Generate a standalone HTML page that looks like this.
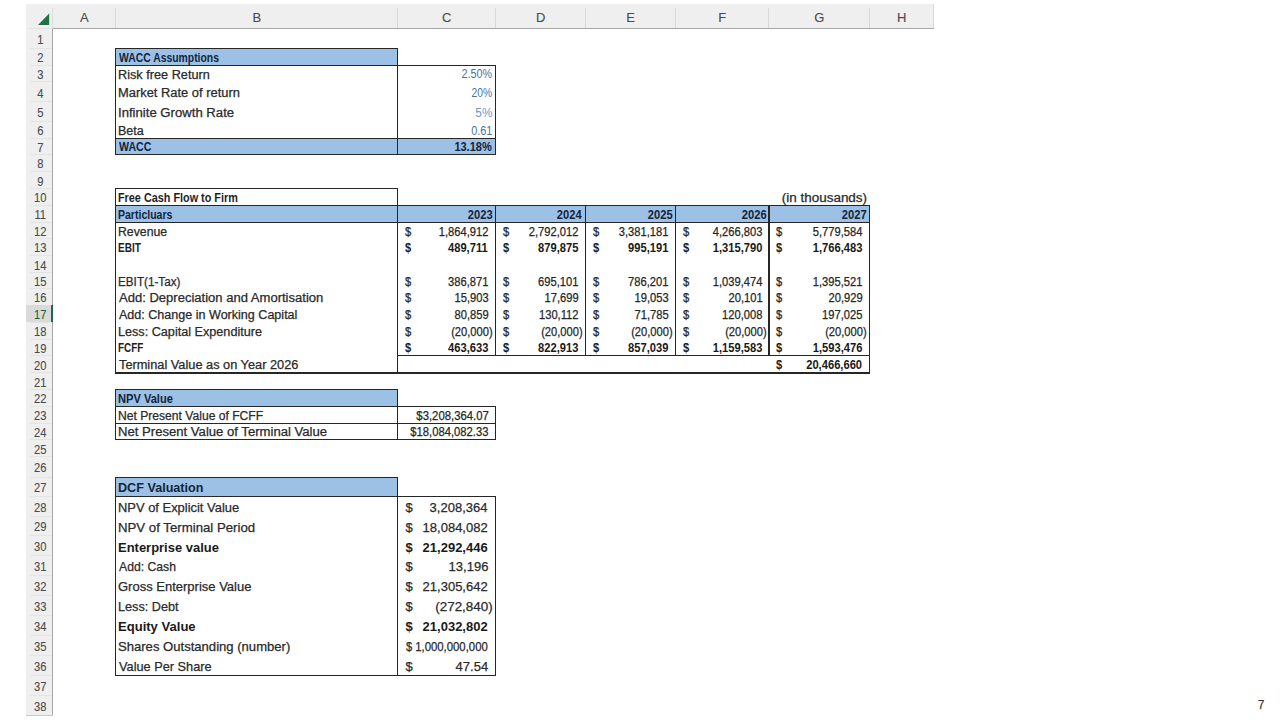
<!DOCTYPE html>
<html><head><meta charset="utf-8"><title>DCF</title>
<style>
html,body{margin:0;padding:0;background:#fff;width:1280px;height:720px;overflow:hidden;position:relative}
.t,.h{position:absolute;white-space:nowrap;line-height:1;font-family:'Liberation Sans', sans-serif}
.r{-webkit-text-stroke:0.25px currentColor}
.h{color:#4a4a4a;-webkit-text-stroke:0.1px currentColor}
</style></head><body>
<div style='position:absolute;left:26.00px;top:4.20px;width:907.50px;height:24.40px;background:#efefef'></div>
<div style='position:absolute;left:52.00px;top:27.80px;width:882.00px;height:1.2px;background:#a6a6a6'></div>
<div style='position:absolute;left:115.00px;top:7.50px;width:1px;height:20.60px;background:#d9d9d9'></div>
<div style='position:absolute;left:397.00px;top:7.50px;width:1px;height:20.60px;background:#d9d9d9'></div>
<div style='position:absolute;left:494.70px;top:7.50px;width:1px;height:20.60px;background:#d9d9d9'></div>
<div style='position:absolute;left:585.10px;top:7.50px;width:1px;height:20.60px;background:#d9d9d9'></div>
<div style='position:absolute;left:674.70px;top:7.50px;width:1px;height:20.60px;background:#d9d9d9'></div>
<div style='position:absolute;left:768.40px;top:7.50px;width:1px;height:20.60px;background:#d9d9d9'></div>
<div style='position:absolute;left:868.80px;top:7.50px;width:1px;height:20.60px;background:#d9d9d9'></div>
<div style='position:absolute;left:933.00px;top:3.70px;width:1px;height:24.80px;background:#d9d9d9'></div>
<div style='position:absolute;left:26.00px;top:28.40px;width:26.50px;height:687.00px;background:#efefef'></div>
<div style='position:absolute;left:28.50px;top:27.90px;width:23.50px;height:1px;background:#e2e2e2'></div>
<div style='position:absolute;left:51.90px;top:27.70px;width:1.2px;height:688.20px;background:#a6a6a6'></div>
<div style='position:absolute;left:52.00px;top:7.50px;width:1px;height:21.00px;background:#dcdcdc'></div>
<div style='position:absolute;left:25.50px;top:714.90px;width:27.50px;height:1px;background:#c9c9c9'></div>
<div style='position:absolute;left:29.50px;top:47.80px;width:22.50px;height:1px;background:#e4e4e4'></div>
<div style='position:absolute;left:29.50px;top:64.80px;width:22.50px;height:1px;background:#e4e4e4'></div>
<div style='position:absolute;left:29.50px;top:81.00px;width:22.50px;height:1px;background:#e4e4e4'></div>
<div style='position:absolute;left:29.50px;top:101.20px;width:22.50px;height:1px;background:#e4e4e4'></div>
<div style='position:absolute;left:29.50px;top:120.50px;width:22.50px;height:1px;background:#e4e4e4'></div>
<div style='position:absolute;left:29.50px;top:138.00px;width:22.50px;height:1px;background:#e4e4e4'></div>
<div style='position:absolute;left:29.50px;top:153.80px;width:22.50px;height:1px;background:#e4e4e4'></div>
<div style='position:absolute;left:29.50px;top:171.00px;width:22.50px;height:1px;background:#e4e4e4'></div>
<div style='position:absolute;left:29.50px;top:188.20px;width:22.50px;height:1px;background:#e4e4e4'></div>
<div style='position:absolute;left:29.50px;top:205.00px;width:22.50px;height:1px;background:#e4e4e4'></div>
<div style='position:absolute;left:29.50px;top:221.70px;width:22.50px;height:1px;background:#e4e4e4'></div>
<div style='position:absolute;left:29.50px;top:238.40px;width:22.50px;height:1px;background:#e4e4e4'></div>
<div style='position:absolute;left:29.50px;top:254.80px;width:22.50px;height:1px;background:#e4e4e4'></div>
<div style='position:absolute;left:29.50px;top:272.10px;width:22.50px;height:1px;background:#e4e4e4'></div>
<div style='position:absolute;left:29.50px;top:288.10px;width:22.50px;height:1px;background:#e4e4e4'></div>
<div style='position:absolute;left:29.50px;top:304.70px;width:22.50px;height:1px;background:#e4e4e4'></div>
<div style='position:absolute;left:29.50px;top:321.90px;width:22.50px;height:1px;background:#e4e4e4'></div>
<div style='position:absolute;left:29.50px;top:338.50px;width:22.50px;height:1px;background:#e4e4e4'></div>
<div style='position:absolute;left:29.50px;top:355.20px;width:22.50px;height:1px;background:#e4e4e4'></div>
<div style='position:absolute;left:29.50px;top:372.40px;width:22.50px;height:1px;background:#e4e4e4'></div>
<div style='position:absolute;left:29.50px;top:389.30px;width:22.50px;height:1px;background:#e4e4e4'></div>
<div style='position:absolute;left:29.50px;top:405.80px;width:22.50px;height:1px;background:#e4e4e4'></div>
<div style='position:absolute;left:29.50px;top:423.00px;width:22.50px;height:1px;background:#e4e4e4'></div>
<div style='position:absolute;left:29.50px;top:439.30px;width:22.50px;height:1px;background:#e4e4e4'></div>
<div style='position:absolute;left:29.50px;top:456.30px;width:22.50px;height:1px;background:#e4e4e4'></div>
<div style='position:absolute;left:29.50px;top:476.70px;width:22.50px;height:1px;background:#e4e4e4'></div>
<div style='position:absolute;left:29.50px;top:495.80px;width:22.50px;height:1px;background:#e4e4e4'></div>
<div style='position:absolute;left:29.50px;top:515.70px;width:22.50px;height:1px;background:#e4e4e4'></div>
<div style='position:absolute;left:29.50px;top:535.40px;width:22.50px;height:1px;background:#e4e4e4'></div>
<div style='position:absolute;left:29.50px;top:555.30px;width:22.50px;height:1px;background:#e4e4e4'></div>
<div style='position:absolute;left:29.50px;top:574.90px;width:22.50px;height:1px;background:#e4e4e4'></div>
<div style='position:absolute;left:29.50px;top:594.90px;width:22.50px;height:1px;background:#e4e4e4'></div>
<div style='position:absolute;left:29.50px;top:615.30px;width:22.50px;height:1px;background:#e4e4e4'></div>
<div style='position:absolute;left:29.50px;top:635.30px;width:22.50px;height:1px;background:#e4e4e4'></div>
<div style='position:absolute;left:29.50px;top:655.30px;width:22.50px;height:1px;background:#e4e4e4'></div>
<div style='position:absolute;left:29.50px;top:674.90px;width:22.50px;height:1px;background:#e4e4e4'></div>
<div style='position:absolute;left:29.50px;top:694.70px;width:22.50px;height:1px;background:#e4e4e4'></div>
<div style='position:absolute;left:26.00px;top:305.20px;width:25.20px;height:17.20px;background:#dadada'></div>
<div style='position:absolute;left:51.00px;top:305.20px;width:2.20px;height:17.20px;background:#1e6a40'></div>
<div style='position:absolute;left:115.50px;top:48.30px;width:282.00px;height:17.00px;background:#9cc1e5'></div>
<div style='position:absolute;left:115.50px;top:138.50px;width:379.70px;height:15.80px;background:#9cc1e5'></div>
<div style='position:absolute;left:115.50px;top:205.50px;width:753.80px;height:16.70px;background:#9cc1e5'></div>
<div style='position:absolute;left:115.50px;top:389.80px;width:282.00px;height:16.50px;background:#9cc1e5'></div>
<div style='position:absolute;left:115.50px;top:477.20px;width:282.00px;height:19.10px;background:#9cc1e5'></div>
<div style='position:absolute;left:115.00px;top:47.65px;width:283.00px;height:1.3px;background:#262626'></div>
<div style='position:absolute;left:115.00px;top:64.65px;width:380.70px;height:1.3px;background:#262626'></div>
<div style='position:absolute;left:115.00px;top:137.85px;width:380.70px;height:1.3px;background:#262626'></div>
<div style='position:absolute;left:115.00px;top:153.65px;width:380.70px;height:1.3px;background:#262626'></div>
<div style='position:absolute;left:114.85px;top:47.80px;width:1.3px;height:107.00px;background:#262626'></div>
<div style='position:absolute;left:396.85px;top:47.80px;width:1.3px;height:107.00px;background:#262626'></div>
<div style='position:absolute;left:494.55px;top:64.80px;width:1.3px;height:90.00px;background:#262626'></div>
<div style='position:absolute;left:115.00px;top:188.05px;width:283.00px;height:1.3px;background:#262626'></div>
<div style='position:absolute;left:115.00px;top:204.85px;width:754.80px;height:1.3px;background:#262626'></div>
<div style='position:absolute;left:115.00px;top:221.55px;width:754.80px;height:1.3px;background:#262626'></div>
<div style='position:absolute;left:397.00px;top:355.05px;width:472.80px;height:1.3px;background:#262626'></div>
<div style='position:absolute;left:115.00px;top:372.25px;width:754.80px;height:1.3px;background:#262626'></div>
<div style='position:absolute;left:114.85px;top:188.20px;width:1.3px;height:185.20px;background:#262626'></div>
<div style='position:absolute;left:396.85px;top:188.20px;width:1.3px;height:185.20px;background:#262626'></div>
<div style='position:absolute;left:868.65px;top:205.00px;width:1.3px;height:168.40px;background:#262626'></div>
<div style='position:absolute;left:494.55px;top:205.00px;width:1.3px;height:151.20px;background:#262626'></div>
<div style='position:absolute;left:584.95px;top:205.00px;width:1.3px;height:151.20px;background:#262626'></div>
<div style='position:absolute;left:674.55px;top:205.00px;width:1.3px;height:151.20px;background:#262626'></div>
<div style='position:absolute;left:768.25px;top:205.00px;width:1.3px;height:151.20px;background:#262626'></div>
<div style='position:absolute;left:115.00px;top:389.15px;width:283.00px;height:1.3px;background:#262626'></div>
<div style='position:absolute;left:115.00px;top:405.65px;width:380.70px;height:1.3px;background:#262626'></div>
<div style='position:absolute;left:115.00px;top:422.95px;width:380.70px;height:1.1px;background:#262626'></div>
<div style='position:absolute;left:115.00px;top:439.15px;width:380.70px;height:1.3px;background:#262626'></div>
<div style='position:absolute;left:114.85px;top:389.30px;width:1.3px;height:51.00px;background:#262626'></div>
<div style='position:absolute;left:396.85px;top:389.30px;width:1.3px;height:51.00px;background:#262626'></div>
<div style='position:absolute;left:494.55px;top:405.80px;width:1.3px;height:34.50px;background:#262626'></div>
<div style='position:absolute;left:115.00px;top:476.55px;width:283.00px;height:1.3px;background:#262626'></div>
<div style='position:absolute;left:115.00px;top:495.65px;width:380.70px;height:1.3px;background:#262626'></div>
<div style='position:absolute;left:115.00px;top:674.75px;width:380.70px;height:1.3px;background:#262626'></div>
<div style='position:absolute;left:114.85px;top:476.70px;width:1.3px;height:199.20px;background:#262626'></div>
<div style='position:absolute;left:396.85px;top:476.70px;width:1.3px;height:199.20px;background:#262626'></div>
<div style='position:absolute;left:494.55px;top:495.80px;width:1.3px;height:180.10px;background:#262626'></div>
<svg style='position:absolute;left:0;top:0' width='60' height='30'><polygon points='38,25 49.2,25 49.2,13.6' fill='#207245'/></svg>
<div class='h' style='left:54.30px;top:10.85px;width:60px;text-align:center;font-size:13px'>A</div>
<div class='h' style='left:226.80px;top:10.85px;width:60px;text-align:center;font-size:13px'>B</div>
<div class='h' style='left:416.65px;top:10.85px;width:60px;text-align:center;font-size:13px'>C</div>
<div class='h' style='left:510.70px;top:10.85px;width:60px;text-align:center;font-size:13px'>D</div>
<div class='h' style='left:600.70px;top:10.85px;width:60px;text-align:center;font-size:13px'>E</div>
<div class='h' style='left:692.35px;top:10.85px;width:60px;text-align:center;font-size:13px'>F</div>
<div class='h' style='left:789.40px;top:10.85px;width:60px;text-align:center;font-size:13px'>G</div>
<div class='h' style='left:871.70px;top:10.85px;width:60px;text-align:center;font-size:13px'>H</div>
<div class='h' style='left:26.90px;top:33.25px;width:26.50px;text-align:center;font-size:13px;transform:scaleX(0.86);color:#4a4a4a'>1</div>
<div class='h' style='left:26.90px;top:51.05px;width:26.50px;text-align:center;font-size:13px;transform:scaleX(0.86);color:#4a4a4a'>2</div>
<div class='h' style='left:26.90px;top:67.85px;width:26.50px;text-align:center;font-size:13px;transform:scaleX(0.86);color:#4a4a4a'>3</div>
<div class='h' style='left:26.90px;top:86.55px;width:26.50px;text-align:center;font-size:13px;transform:scaleX(0.86);color:#4a4a4a'>4</div>
<div class='h' style='left:26.90px;top:106.25px;width:26.50px;text-align:center;font-size:13px;transform:scaleX(0.86);color:#4a4a4a'>5</div>
<div class='h' style='left:26.90px;top:124.35px;width:26.50px;text-align:center;font-size:13px;transform:scaleX(0.86);color:#4a4a4a'>6</div>
<div class='h' style='left:26.90px;top:140.55px;width:26.50px;text-align:center;font-size:13px;transform:scaleX(0.86);color:#4a4a4a'>7</div>
<div class='h' style='left:26.90px;top:157.45px;width:26.50px;text-align:center;font-size:13px;transform:scaleX(0.86);color:#4a4a4a'>8</div>
<div class='h' style='left:26.90px;top:174.65px;width:26.50px;text-align:center;font-size:13px;transform:scaleX(0.86);color:#4a4a4a'>9</div>
<div class='h' style='left:26.90px;top:191.45px;width:26.50px;text-align:center;font-size:13px;transform:scaleX(0.86);color:#4a4a4a'>10</div>
<div class='h' style='left:26.90px;top:208.15px;width:26.50px;text-align:center;font-size:13px;transform:scaleX(0.86);color:#4a4a4a'>11</div>
<div class='h' style='left:26.90px;top:224.85px;width:26.50px;text-align:center;font-size:13px;transform:scaleX(0.86);color:#4a4a4a'>12</div>
<div class='h' style='left:26.90px;top:241.25px;width:26.50px;text-align:center;font-size:13px;transform:scaleX(0.86);color:#4a4a4a'>13</div>
<div class='h' style='left:26.90px;top:258.55px;width:26.50px;text-align:center;font-size:13px;transform:scaleX(0.86);color:#4a4a4a'>14</div>
<div class='h' style='left:26.90px;top:274.55px;width:26.50px;text-align:center;font-size:13px;transform:scaleX(0.86);color:#4a4a4a'>15</div>
<div class='h' style='left:26.90px;top:291.15px;width:26.50px;text-align:center;font-size:13px;transform:scaleX(0.86);color:#4a4a4a'>16</div>
<div class='h' style='left:26.90px;top:308.35px;width:26.50px;text-align:center;font-size:13px;transform:scaleX(0.86);color:#1f5f3a'>17</div>
<div class='h' style='left:26.90px;top:324.95px;width:26.50px;text-align:center;font-size:13px;transform:scaleX(0.86);color:#4a4a4a'>18</div>
<div class='h' style='left:26.90px;top:341.65px;width:26.50px;text-align:center;font-size:13px;transform:scaleX(0.86);color:#4a4a4a'>19</div>
<div class='h' style='left:26.90px;top:358.85px;width:26.50px;text-align:center;font-size:13px;transform:scaleX(0.86);color:#4a4a4a'>20</div>
<div class='h' style='left:26.90px;top:375.75px;width:26.50px;text-align:center;font-size:13px;transform:scaleX(0.86);color:#4a4a4a'>21</div>
<div class='h' style='left:26.90px;top:392.25px;width:26.50px;text-align:center;font-size:13px;transform:scaleX(0.86);color:#4a4a4a'>22</div>
<div class='h' style='left:26.90px;top:409.45px;width:26.50px;text-align:center;font-size:13px;transform:scaleX(0.86);color:#4a4a4a'>23</div>
<div class='h' style='left:26.90px;top:425.75px;width:26.50px;text-align:center;font-size:13px;transform:scaleX(0.86);color:#4a4a4a'>24</div>
<div class='h' style='left:26.90px;top:442.75px;width:26.50px;text-align:center;font-size:13px;transform:scaleX(0.86);color:#4a4a4a'>25</div>
<div class='h' style='left:26.90px;top:460.95px;width:26.50px;text-align:center;font-size:13px;transform:scaleX(0.86);color:#4a4a4a'>26</div>
<div class='h' style='left:26.90px;top:480.85px;width:26.50px;text-align:center;font-size:13px;transform:scaleX(0.86);color:#4a4a4a'>27</div>
<div class='h' style='left:26.90px;top:500.75px;width:26.50px;text-align:center;font-size:13px;transform:scaleX(0.86);color:#4a4a4a'>28</div>
<div class='h' style='left:26.90px;top:520.45px;width:26.50px;text-align:center;font-size:13px;transform:scaleX(0.86);color:#4a4a4a'>29</div>
<div class='h' style='left:26.90px;top:540.35px;width:26.50px;text-align:center;font-size:13px;transform:scaleX(0.86);color:#4a4a4a'>30</div>
<div class='h' style='left:26.90px;top:559.95px;width:26.50px;text-align:center;font-size:13px;transform:scaleX(0.86);color:#4a4a4a'>31</div>
<div class='h' style='left:26.90px;top:579.95px;width:26.50px;text-align:center;font-size:13px;transform:scaleX(0.86);color:#4a4a4a'>32</div>
<div class='h' style='left:26.90px;top:600.35px;width:26.50px;text-align:center;font-size:13px;transform:scaleX(0.86);color:#4a4a4a'>33</div>
<div class='h' style='left:26.90px;top:620.35px;width:26.50px;text-align:center;font-size:13px;transform:scaleX(0.86);color:#4a4a4a'>34</div>
<div class='h' style='left:26.90px;top:640.35px;width:26.50px;text-align:center;font-size:13px;transform:scaleX(0.86);color:#4a4a4a'>35</div>
<div class='h' style='left:26.90px;top:659.95px;width:26.50px;text-align:center;font-size:13px;transform:scaleX(0.86);color:#4a4a4a'>36</div>
<div class='h' style='left:26.90px;top:679.75px;width:26.50px;text-align:center;font-size:13px;transform:scaleX(0.86);color:#4a4a4a'>37</div>
<div class='h' style='left:26.90px;top:699.95px;width:26.50px;text-align:center;font-size:13px;transform:scaleX(0.86);color:#4a4a4a'>38</div>
<div class='t' style="top:51.70px;font-size:12px;color:#13243d;font-weight:bold;left:118.90px;transform:scaleX(0.865);transform-origin:0 0;">WACC Assumptions</div>
<div class='t r' style="top:68.70px;font-size:12px;color:#2a2a2a;left:117.84px;transform:scaleX(1.059);transform-origin:0 0;">Risk free Return</div>
<div class='t r' style="top:87.40px;font-size:12px;color:#2a2a2a;left:117.83px;transform:scaleX(1.075);transform-origin:0 0;">Market Rate of return</div>
<div class='t r' style="top:107.20px;font-size:12px;color:#2a2a2a;left:117.80px;transform:scaleX(1.095);transform-origin:0 0;">Infinite Growth Rate</div>
<div class='t r' style="top:125.05px;font-size:12px;color:#2a2a2a;left:117.86px;transform:scaleX(1.042);transform-origin:0 0;">Beta</div>
<div class='t' style="top:141.30px;font-size:12px;color:#13243d;font-weight:bold;left:118.60px;transform:scaleX(0.883);transform-origin:0 0;">WACC</div>
<div class='t' style="top:68.30px;font-size:12px;color:#4872a0;right:788.27px;transform:scaleX(0.894);transform-origin:100% 0;">2.50%</div>
<div class='t' style="top:87.20px;font-size:12px;color:#4872a0;right:788.27px;transform:scaleX(0.850);transform-origin:100% 0;">20%</div>
<div class='t' style="top:107.00px;font-size:12px;color:#6b98cc;right:787.96px;transform:scaleX(0.981);transform-origin:100% 0;">5%</div>
<div class='t' style="top:125.00px;font-size:12px;color:#4872a0;right:787.98px;transform:scaleX(0.904);transform-origin:100% 0;">0.61</div>
<div class='t' style="top:141.30px;font-size:12px;color:#13243d;font-weight:bold;right:788.27px;transform:scaleX(0.917);transform-origin:100% 0;">13.18%</div>
<div class='t' style="top:191.90px;font-size:12px;color:#1e1e1e;font-weight:bold;left:118.00px;transform:scaleX(0.903);transform-origin:0 0;">Free Cash Flow to Firm</div>
<div class='t r' style="top:192.00px;font-size:12px;color:#2a2a2a;right:412.58px;transform:scaleX(1.120);transform-origin:100% 0;">(in thousands)</div>
<div class='t' style="top:208.70px;font-size:12px;color:#13243d;font-weight:bold;left:118.02px;transform:scaleX(0.877);transform-origin:0 0;">Particluars</div>
<div class='t r' style="top:225.60px;font-size:12px;color:#2a2a2a;left:117.88px;transform:scaleX(1.023);transform-origin:0 0;">Revenue</div>
<div class='t' style="top:241.90px;font-size:12px;color:#1e1e1e;font-weight:bold;left:118.06px;transform:scaleX(0.840);transform-origin:0 0;">EBIT</div>
<div class='t r' style="top:276.10px;font-size:12px;color:#2a2a2a;left:117.92px;transform:scaleX(0.976);transform-origin:0 0;">EBIT(1-Tax)</div>
<div class='t r' style="top:292.40px;font-size:12px;color:#2a2a2a;left:118.90px;transform:scaleX(1.086);transform-origin:0 0;">Add: Depreciation and Amortisation</div>
<div class='t r' style="top:309.30px;font-size:12px;color:#2a2a2a;left:118.90px;transform:scaleX(1.046);transform-origin:0 0;">Add: Change in Working Capital</div>
<div class='t r' style="top:326.10px;font-size:12px;color:#2a2a2a;left:117.85px;transform:scaleX(1.053);transform-origin:0 0;">Less: Capital Expenditure</div>
<div class='t' style="top:342.40px;font-size:12px;color:#1e1e1e;font-weight:bold;left:118.07px;transform:scaleX(0.828);transform-origin:0 0;">FCFF</div>
<div class='t r' style="top:359.10px;font-size:12px;color:#2a2a2a;left:118.90px;transform:scaleX(1.064);transform-origin:0 0;">Terminal Value as on Year 2026</div>
<div class='t' style="top:208.50px;font-size:12px;color:#13243d;font-weight:bold;right:787.45px;transform:scaleX(0.930);transform-origin:100% 0;">2023</div>
<div class='t' style="top:208.50px;font-size:12px;color:#13243d;font-weight:bold;right:698.08px;transform:scaleX(0.930);transform-origin:100% 0;">2024</div>
<div class='t' style="top:208.50px;font-size:12px;color:#13243d;font-weight:bold;right:607.78px;transform:scaleX(0.930);transform-origin:100% 0;">2025</div>
<div class='t' style="top:208.50px;font-size:12px;color:#13243d;font-weight:bold;right:513.10px;transform:scaleX(0.930);transform-origin:100% 0;">2026</div>
<div class='t' style="top:208.50px;font-size:12px;color:#13243d;font-weight:bold;right:413.10px;transform:scaleX(0.930);transform-origin:100% 0;">2027</div>
<div class='t r' style="top:225.60px;font-size:12px;color:#262626;left:405.20px;transform:scaleX(0.930);transform-origin:0 0;">$</div>
<div class='t r' style="top:225.60px;font-size:12px;color:#262626;right:791.64px;transform:scaleX(0.930);transform-origin:100% 0;">1,864,912</div>
<div class='t r' style="top:225.60px;font-size:12px;color:#262626;left:502.50px;transform:scaleX(0.930);transform-origin:0 0;">$</div>
<div class='t r' style="top:225.60px;font-size:12px;color:#262626;right:701.54px;transform:scaleX(0.930);transform-origin:100% 0;">2,792,012</div>
<div class='t r' style="top:225.60px;font-size:12px;color:#262626;left:592.50px;transform:scaleX(0.930);transform-origin:0 0;">$</div>
<div class='t r' style="top:225.60px;font-size:12px;color:#262626;right:611.64px;transform:scaleX(0.930);transform-origin:100% 0;">3,381,181</div>
<div class='t r' style="top:225.60px;font-size:12px;color:#262626;left:682.80px;transform:scaleX(0.930);transform-origin:0 0;">$</div>
<div class='t r' style="top:225.60px;font-size:12px;color:#262626;right:518.04px;transform:scaleX(0.930);transform-origin:100% 0;">4,266,803</div>
<div class='t r' style="top:225.60px;font-size:12px;color:#262626;left:776.10px;transform:scaleX(0.930);transform-origin:0 0;">$</div>
<div class='t r' style="top:225.60px;font-size:12px;color:#262626;right:417.54px;transform:scaleX(0.930);transform-origin:100% 0;">5,779,584</div>
<div class='t' style="top:241.90px;font-size:12px;color:#1a1a1a;font-weight:bold;left:405.20px;transform:scaleX(0.930);transform-origin:0 0;">$</div>
<div class='t' style="top:241.90px;font-size:12px;color:#1a1a1a;font-weight:bold;right:792.26px;transform:scaleX(0.930);transform-origin:100% 0;">489,711</div>
<div class='t' style="top:241.90px;font-size:12px;color:#1a1a1a;font-weight:bold;left:502.50px;transform:scaleX(0.930);transform-origin:0 0;">$</div>
<div class='t' style="top:241.90px;font-size:12px;color:#1a1a1a;font-weight:bold;right:701.54px;transform:scaleX(0.930);transform-origin:100% 0;">879,875</div>
<div class='t' style="top:241.90px;font-size:12px;color:#1a1a1a;font-weight:bold;left:592.50px;transform:scaleX(0.930);transform-origin:0 0;">$</div>
<div class='t' style="top:241.90px;font-size:12px;color:#1a1a1a;font-weight:bold;right:611.64px;transform:scaleX(0.930);transform-origin:100% 0;">995,191</div>
<div class='t' style="top:241.90px;font-size:12px;color:#1a1a1a;font-weight:bold;left:682.80px;transform:scaleX(0.930);transform-origin:0 0;">$</div>
<div class='t' style="top:241.90px;font-size:12px;color:#1a1a1a;font-weight:bold;right:518.04px;transform:scaleX(0.930);transform-origin:100% 0;">1,315,790</div>
<div class='t' style="top:241.90px;font-size:12px;color:#1a1a1a;font-weight:bold;left:776.10px;transform:scaleX(0.930);transform-origin:0 0;">$</div>
<div class='t' style="top:241.90px;font-size:12px;color:#1a1a1a;font-weight:bold;right:417.54px;transform:scaleX(0.930);transform-origin:100% 0;">1,766,483</div>
<div class='t r' style="top:276.10px;font-size:12px;color:#262626;left:405.20px;transform:scaleX(0.930);transform-origin:0 0;">$</div>
<div class='t r' style="top:276.10px;font-size:12px;color:#262626;right:791.64px;transform:scaleX(0.930);transform-origin:100% 0;">386,871</div>
<div class='t r' style="top:276.10px;font-size:12px;color:#262626;left:502.50px;transform:scaleX(0.930);transform-origin:0 0;">$</div>
<div class='t r' style="top:276.10px;font-size:12px;color:#262626;right:701.54px;transform:scaleX(0.930);transform-origin:100% 0;">695,101</div>
<div class='t r' style="top:276.10px;font-size:12px;color:#262626;left:592.50px;transform:scaleX(0.930);transform-origin:0 0;">$</div>
<div class='t r' style="top:276.10px;font-size:12px;color:#262626;right:611.64px;transform:scaleX(0.930);transform-origin:100% 0;">786,201</div>
<div class='t r' style="top:276.10px;font-size:12px;color:#262626;left:682.80px;transform:scaleX(0.930);transform-origin:0 0;">$</div>
<div class='t r' style="top:276.10px;font-size:12px;color:#262626;right:518.04px;transform:scaleX(0.930);transform-origin:100% 0;">1,039,474</div>
<div class='t r' style="top:276.10px;font-size:12px;color:#262626;left:776.10px;transform:scaleX(0.930);transform-origin:0 0;">$</div>
<div class='t r' style="top:276.10px;font-size:12px;color:#262626;right:417.54px;transform:scaleX(0.930);transform-origin:100% 0;">1,395,521</div>
<div class='t r' style="top:292.40px;font-size:12px;color:#262626;left:405.20px;transform:scaleX(0.930);transform-origin:0 0;">$</div>
<div class='t r' style="top:292.40px;font-size:12px;color:#262626;right:791.35px;transform:scaleX(0.930);transform-origin:100% 0;">15,903</div>
<div class='t r' style="top:292.40px;font-size:12px;color:#262626;left:502.50px;transform:scaleX(0.930);transform-origin:0 0;">$</div>
<div class='t r' style="top:292.40px;font-size:12px;color:#262626;right:701.25px;transform:scaleX(0.930);transform-origin:100% 0;">17,699</div>
<div class='t r' style="top:292.40px;font-size:12px;color:#262626;left:592.50px;transform:scaleX(0.930);transform-origin:0 0;">$</div>
<div class='t r' style="top:292.40px;font-size:12px;color:#262626;right:611.35px;transform:scaleX(0.930);transform-origin:100% 0;">19,053</div>
<div class='t r' style="top:292.40px;font-size:12px;color:#262626;left:682.80px;transform:scaleX(0.930);transform-origin:0 0;">$</div>
<div class='t r' style="top:292.40px;font-size:12px;color:#262626;right:517.75px;transform:scaleX(0.930);transform-origin:100% 0;">20,101</div>
<div class='t r' style="top:292.40px;font-size:12px;color:#262626;left:776.10px;transform:scaleX(0.930);transform-origin:0 0;">$</div>
<div class='t r' style="top:292.40px;font-size:12px;color:#262626;right:417.25px;transform:scaleX(0.930);transform-origin:100% 0;">20,929</div>
<div class='t r' style="top:309.30px;font-size:12px;color:#262626;left:405.20px;transform:scaleX(0.930);transform-origin:0 0;">$</div>
<div class='t r' style="top:309.30px;font-size:12px;color:#262626;right:791.35px;transform:scaleX(0.930);transform-origin:100% 0;">80,859</div>
<div class='t r' style="top:309.30px;font-size:12px;color:#262626;left:502.50px;transform:scaleX(0.930);transform-origin:0 0;">$</div>
<div class='t r' style="top:309.30px;font-size:12px;color:#262626;right:701.43px;transform:scaleX(0.930);transform-origin:100% 0;">130,112</div>
<div class='t r' style="top:309.30px;font-size:12px;color:#262626;left:592.50px;transform:scaleX(0.930);transform-origin:0 0;">$</div>
<div class='t r' style="top:309.30px;font-size:12px;color:#262626;right:611.35px;transform:scaleX(0.930);transform-origin:100% 0;">71,785</div>
<div class='t r' style="top:309.30px;font-size:12px;color:#262626;left:682.80px;transform:scaleX(0.930);transform-origin:0 0;">$</div>
<div class='t r' style="top:309.30px;font-size:12px;color:#262626;right:518.04px;transform:scaleX(0.930);transform-origin:100% 0;">120,008</div>
<div class='t r' style="top:309.30px;font-size:12px;color:#262626;left:776.10px;transform:scaleX(0.930);transform-origin:0 0;">$</div>
<div class='t r' style="top:309.30px;font-size:12px;color:#262626;right:417.54px;transform:scaleX(0.930);transform-origin:100% 0;">197,025</div>
<div class='t r' style="top:326.10px;font-size:12px;color:#262626;left:405.20px;transform:scaleX(0.930);transform-origin:0 0;">$</div>
<div class='t r' style="top:326.10px;font-size:12px;color:#262626;right:787.35px;transform:scaleX(0.930);transform-origin:100% 0;">(20,000)</div>
<div class='t r' style="top:326.10px;font-size:12px;color:#262626;left:502.50px;transform:scaleX(0.930);transform-origin:0 0;">$</div>
<div class='t r' style="top:326.10px;font-size:12px;color:#262626;right:697.25px;transform:scaleX(0.930);transform-origin:100% 0;">(20,000)</div>
<div class='t r' style="top:326.10px;font-size:12px;color:#262626;left:592.50px;transform:scaleX(0.930);transform-origin:0 0;">$</div>
<div class='t r' style="top:326.10px;font-size:12px;color:#262626;right:607.35px;transform:scaleX(0.930);transform-origin:100% 0;">(20,000)</div>
<div class='t r' style="top:326.10px;font-size:12px;color:#262626;left:682.80px;transform:scaleX(0.930);transform-origin:0 0;">$</div>
<div class='t r' style="top:326.10px;font-size:12px;color:#262626;right:513.75px;transform:scaleX(0.930);transform-origin:100% 0;">(20,000)</div>
<div class='t r' style="top:326.10px;font-size:12px;color:#262626;left:776.10px;transform:scaleX(0.930);transform-origin:0 0;">$</div>
<div class='t r' style="top:326.10px;font-size:12px;color:#262626;right:413.25px;transform:scaleX(0.930);transform-origin:100% 0;">(20,000)</div>
<div class='t' style="top:342.40px;font-size:12px;color:#1a1a1a;font-weight:bold;left:405.20px;transform:scaleX(0.930);transform-origin:0 0;">$</div>
<div class='t' style="top:342.40px;font-size:12px;color:#1a1a1a;font-weight:bold;right:791.64px;transform:scaleX(0.930);transform-origin:100% 0;">463,633</div>
<div class='t' style="top:342.40px;font-size:12px;color:#1a1a1a;font-weight:bold;left:502.50px;transform:scaleX(0.930);transform-origin:0 0;">$</div>
<div class='t' style="top:342.40px;font-size:12px;color:#1a1a1a;font-weight:bold;right:701.54px;transform:scaleX(0.930);transform-origin:100% 0;">822,913</div>
<div class='t' style="top:342.40px;font-size:12px;color:#1a1a1a;font-weight:bold;left:592.50px;transform:scaleX(0.930);transform-origin:0 0;">$</div>
<div class='t' style="top:342.40px;font-size:12px;color:#1a1a1a;font-weight:bold;right:611.64px;transform:scaleX(0.930);transform-origin:100% 0;">857,039</div>
<div class='t' style="top:342.40px;font-size:12px;color:#1a1a1a;font-weight:bold;left:682.80px;transform:scaleX(0.930);transform-origin:0 0;">$</div>
<div class='t' style="top:342.40px;font-size:12px;color:#1a1a1a;font-weight:bold;right:518.04px;transform:scaleX(0.930);transform-origin:100% 0;">1,159,583</div>
<div class='t' style="top:342.40px;font-size:12px;color:#1a1a1a;font-weight:bold;left:776.10px;transform:scaleX(0.930);transform-origin:0 0;">$</div>
<div class='t' style="top:342.40px;font-size:12px;color:#1a1a1a;font-weight:bold;right:417.54px;transform:scaleX(0.930);transform-origin:100% 0;">1,593,476</div>
<div class='t' style="top:359.10px;font-size:12px;color:#1a1a1a;font-weight:bold;left:776.10px;transform:scaleX(0.930);transform-origin:0 0;">$</div>
<div class='t' style="top:359.10px;font-size:12px;color:#1a1a1a;font-weight:bold;right:417.84px;transform:scaleX(0.930);transform-origin:100% 0;">20,466,660</div>
<div class='t' style="top:393.00px;font-size:12px;color:#13243d;font-weight:bold;left:117.98px;transform:scaleX(0.924);transform-origin:0 0;">NPV Value</div>
<div class='t r' style="top:409.70px;font-size:12px;color:#2a2a2a;left:117.89px;transform:scaleX(1.009);transform-origin:0 0;">Net Present Value of FCFF</div>
<div class='t r' style="top:426.30px;font-size:12px;color:#2a2a2a;left:117.81px;transform:scaleX(1.092);transform-origin:0 0;">Net Present Value of Terminal Value</div>
<div class='t r' style="top:409.60px;font-size:12px;color:#262626;right:791.39px;transform:scaleX(0.943);transform-origin:100% 0;">$3,208,364.07</div>
<div class='t r' style="top:426.40px;font-size:12px;color:#262626;right:791.71px;transform:scaleX(0.936);transform-origin:100% 0;">$18,084,082.33</div>
<div class='t' style="top:480.95px;font-size:13px;color:#13243d;font-weight:bold;left:118.03px;transform:scaleX(0.970);transform-origin:0 0;">DCF Valuation</div>
<div class='t r' style="top:500.85px;font-size:13px;color:#2a2a2a;left:118.01px;transform:scaleX(0.994);transform-origin:0 0;">NPV of Explicit Value</div>
<div class='t r' style="top:500.85px;font-size:13px;color:#2a2a2a;left:405.60px;">$</div>
<div class='t r' style="top:500.85px;font-size:13px;color:#2a2a2a;right:792.56px;">3,208,364</div>
<div class='t r' style="top:520.75px;font-size:13px;color:#2a2a2a;left:117.98px;transform:scaleX(1.017);transform-origin:0 0;">NPV of Terminal Period</div>
<div class='t r' style="top:520.75px;font-size:13px;color:#2a2a2a;left:405.60px;">$</div>
<div class='t r' style="top:520.75px;font-size:13px;color:#2a2a2a;right:792.32px;">18,084,082</div>
<div class='t' style="top:540.65px;font-size:13px;color:#1a1a1a;font-weight:bold;left:118.00px;transform:scaleX(0.997);transform-origin:0 0;">Enterprise value</div>
<div class='t' style="top:540.65px;font-size:13px;color:#1a1a1a;font-weight:bold;left:405.60px;">$</div>
<div class='t' style="top:540.65px;font-size:13px;color:#1a1a1a;font-weight:bold;right:792.32px;">21,292,446</div>
<div class='t r' style="top:560.15px;font-size:13px;color:#2a2a2a;left:119.00px;transform:scaleX(0.938);transform-origin:0 0;">Add: Cash</div>
<div class='t r' style="top:560.15px;font-size:13px;color:#2a2a2a;left:405.60px;">$</div>
<div class='t r' style="top:560.15px;font-size:13px;color:#2a2a2a;right:791.63px;">13,196</div>
<div class='t r' style="top:580.35px;font-size:13px;color:#2a2a2a;left:118.00px;">Gross Enterprise Value</div>
<div class='t r' style="top:580.35px;font-size:13px;color:#2a2a2a;left:405.60px;">$</div>
<div class='t r' style="top:580.35px;font-size:13px;color:#2a2a2a;right:792.32px;">21,305,642</div>
<div class='t r' style="top:600.15px;font-size:13px;color:#2a2a2a;left:118.03px;transform:scaleX(0.974);transform-origin:0 0;">Less: Debt</div>
<div class='t r' style="top:600.15px;font-size:13px;color:#2a2a2a;left:405.60px;">$</div>
<div class='t r' style="top:600.15px;font-size:13px;color:#2a2a2a;right:787.22px;transform:scaleX(1.031);transform-origin:100% 0;">(272,840)</div>
<div class='t' style="top:620.25px;font-size:13px;color:#1a1a1a;font-weight:bold;left:118.00px;transform:scaleX(1.004);transform-origin:0 0;">Equity Value</div>
<div class='t' style="top:620.25px;font-size:13px;color:#1a1a1a;font-weight:bold;left:405.60px;">$</div>
<div class='t' style="top:620.25px;font-size:13px;color:#1a1a1a;font-weight:bold;right:792.32px;">21,032,802</div>
<div class='t r' style="top:640.15px;font-size:13px;color:#2a2a2a;left:117.99px;transform:scaleX(1.006);transform-origin:0 0;">Shares Outstanding (number)</div>
<div class='t r' style="top:659.55px;font-size:13px;color:#2a2a2a;left:119.00px;transform:scaleX(0.981);transform-origin:0 0;">Value Per Share</div>
<div class='t r' style="top:659.55px;font-size:13px;color:#2a2a2a;left:405.60px;">$</div>
<div class='t r' style="top:659.55px;font-size:13px;color:#2a2a2a;right:791.85px;">47.54</div>
<div class='t r' style="top:640.80px;font-size:12px;color:#2a2a2a;left:405.75px;transform:scaleX(0.930);transform-origin:0 0;">$</div>
<div class='t r' style="top:640.80px;font-size:12px;color:#2a2a2a;right:791.89px;transform:scaleX(0.945);transform-origin:100% 0;">1,000,000,000</div>
<div class='t r' style="top:698.90px;font-size:12px;color:#333333;left:1257.80px;transform:scaleX(0.930);transform-origin:0 0;">7</div>
</body></html>
